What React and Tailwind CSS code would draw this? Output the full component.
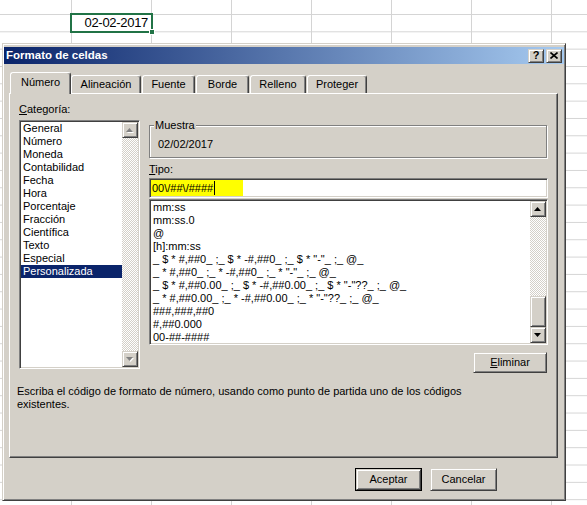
import React from 'react'

const raised = 'border border-t-[#d4d0c8] border-l-[#d4d0c8] border-r-[#404040] border-b-[#404040] shadow-[inset_1px_1px_0_#ffffff,inset_-1px_-1px_0_#808080] bg-[#d4d0c8]'
const sunken = 'border border-t-[#808080] border-l-[#808080] border-r-white border-b-white p-px shadow-[inset_1px_1px_0_#404040,inset_-1px_-1px_0_#d4d0c8] bg-white'
const dither = 'bg-[image:repeating-conic-gradient(#d4d0c8_0%_25%,#ffffff_0%_50%)] bg-size-[2px_2px]'

const categories = [
  'General', 'Número', 'Moneda', 'Contabilidad', 'Fecha', 'Hora',
  'Porcentaje', 'Fracción', 'Científica', 'Texto', 'Especial', 'Personalizada',
]

const formats = [
  'mm:ss',
  'mm:ss.0',
  '@',
  '[h]:mm:ss',
  '_ $ * #,##0_ ;_ $ * -#,##0_ ;_ $ * "-"_ ;_ @_',
  '_ * #,##0_ ;_ * -#,##0_ ;_ * "-"_ ;_ @_',
  '_ $ * #,##0.00_ ;_ $ * -#,##0.00_ ;_ $ * "-"??_ ;_ @_',
  '_ * #,##0.00_ ;_ * -#,##0.00_ ;_ * "-"??_ ;_ @_',
  '###,###,##0',
  '#,##0.000',
  '00-##-####',
]

const tabs = [
  { label: 'Alineación', w: 'w-[70px]', ml: 'ml-0' },
  { label: 'Fuente', w: 'w-[53px]', ml: 'ml-px' },
  { label: 'Borde', w: 'w-[53px]', ml: 'ml-px' },
  { label: 'Relleno', w: 'w-[56px]', ml: 'ml-px' },
  { label: 'Proteger', w: 'w-[60px]', ml: 'ml-px' },
]

function Arrow({ down, disabled }) {
  const pts = down ? '0,0 7,0 3.5,4' : '3.5,0 7,4 0,4'
  return (
    <svg width="8" height="5" viewBox="0 0 8 5">
      {disabled && <polygon points={pts} fill="#ffffff" transform="translate(1,1)" />}
      <polygon points={pts} fill={disabled ? '#808080' : '#000000'} />
    </svg>
  )
}

function ScrollBtn({ down, disabled }) {
  return (
    <div className={`${raised} w-[16px] h-[16px] flex items-center justify-center shrink-0`}>
      <Arrow down={down} disabled={disabled} />
    </div>
  )
}

export default function App() {
  return (
    <div className="relative w-[587px] h-[505px] overflow-hidden bg-white bg-[image:linear-gradient(to_right,#d4d4d4_1px,transparent_1px),linear-gradient(to_bottom,#d4d4d4_1px,transparent_1px)] bg-size-[80px_17.33px] bg-[position:71px_14px] font-['Liberation_Sans',Arial,sans-serif] text-black">
      {/* selected cell */}
      <div className="absolute left-[70px] top-[13px] w-[83px] h-[20px] border-2 border-[#217346] bg-white flex items-center justify-end pr-[3px] text-[13px] tracking-[-0.3px]">
        02-02-2017
        <div className="absolute -right-[4px] -bottom-[4px] w-[6px] h-[6px] bg-[#217346] border border-white" />
      </div>

      {/* dialog */}
      <div className="absolute left-[2px] top-[43px] w-[564px] h-[458px] bg-[#d4d0c8] border border-t-[#d4d0c8] border-l-[#d4d0c8] border-r-[#404040] border-b-[#404040] shadow-[inset_1px_1px_0_#ffffff,inset_-1px_-1px_0_#808080] px-px pt-[3px] text-[11px] leading-[13px]">
        {/* title bar */}
        <div className="h-[17px] flex items-center justify-between pl-[2px] pr-[2px] bg-[linear-gradient(to_right,#0a246a,#a6caf0)]">
          <span className="text-white font-bold text-[11.5px]">Formato de celdas</span>
          <div className="flex gap-[2px]">
            <div className={`${raised} w-[16px] h-[14px] flex items-center justify-center font-bold text-[11px] leading-none`}>?</div>
            <div className={`${raised} w-[16px] h-[14px] flex items-center justify-center`}>
              <svg width="8" height="7" viewBox="0 0 8 7">
                <path d="M0.5 0.5 L7.5 6.5 M7.5 0.5 L0.5 6.5" stroke="#000" strokeWidth="1.6" />
              </svg>
            </div>
          </div>
        </div>

        <div className="pl-[5px] pr-[6px]">
          {/* tabs */}
          <div className="mt-[8px] pl-px h-[21px] flex items-end">
            <div className="relative z-10 h-[22px] -mb-px w-[61px] bg-[#d4d0c8] border-t border-l border-r border-t-white border-l-white border-r-[#404040] rounded-t-[3px] shadow-[inset_-1px_0_0_#808080] flex items-center justify-center pb-[3px]">
              Número
            </div>
            {tabs.map((t) => (
              <div
                key={t.label}
                className={`${t.w} ${t.ml} h-[18px] border-t border-l border-r border-t-white border-l-white border-r-[#404040] rounded-t-[3px] shadow-[inset_-1px_0_0_#808080] flex items-center justify-center`}
              >
                {t.label}
              </div>
            ))}
          </div>

          {/* panel */}
          <div className="h-[365px] border border-t-white border-l-white border-r-[#404040] border-b-[#404040] shadow-[inset_-1px_-1px_0_#808080] pl-[9px] pt-[9px]">
            <div className="flex">
              {/* category */}
              <div className="w-[121px]">
                <div>
                  <span className="underline">C</span>ategoría:
                </div>
                <div className={`${sunken} mt-[4px] h-[249px] flex`}>
                  <div className="flex-1 min-w-0">
                    {categories.map((c, i) => (
                      <div
                        key={c}
                        className={`h-[13px] pl-[2px] text-[11px] leading-[13px] ${i === categories.length - 1 ? 'bg-[#0a246a] text-white' : ''}`}
                      >
                        {c}
                      </div>
                    ))}
                  </div>
                  <div className="w-[16px] flex flex-col">
                    <ScrollBtn disabled />
                    <div className={`flex-1 ${dither}`} />
                    <ScrollBtn down disabled />
                  </div>
                </div>
              </div>

              {/* right column */}
              <div className="ml-[9px] w-[399px] mt-[16px] flex flex-col">
                <fieldset className="h-[39px] w-[398px] border border-[#808080] shadow-[inset_1px_1px_0_#ffffff,1px_1px_0_#ffffff]">
                  <legend className="ml-[4px] px-px bg-[#d4d0c8] leading-[13px]">Muestra</legend>
                  <div className="mt-[6px] pl-[8px]">02/02/2017</div>
                </fieldset>

                <div className="mt-[5px]">
                  <span className="underline">T</span>ipo:
                </div>
                <div className={`${sunken} mt-[2px] h-[20px] flex`}>
                  <div className="h-full w-[92px] bg-[#ffff00] flex items-center pl-px whitespace-pre">
                    00\/##\/####
                    <span className="inline-block w-px h-[14px] bg-black ml-px" />
                  </div>
                </div>

                <div className={`${sunken} mt-px h-[146px] flex`}>
                  <div className="flex-1 min-w-0">
                    {formats.map((f) => (
                      <div key={f} className="h-[13px] pl-[2px] whitespace-pre">
                        {f}
                      </div>
                    ))}
                  </div>
                  <div className="w-[16px] flex flex-col">
                    <ScrollBtn />
                    <div className={`flex-1 ${dither}`} />
                    <div className={`${raised} h-[31px] shrink-0`} />
                    <ScrollBtn down />
                  </div>
                </div>

                <div className={`${raised} self-end mr-px mt-[7px] w-[74px] h-[21px] flex items-center justify-center`}>
                  <span>
                    <span className="underline">E</span>liminar
                  </span>
                </div>
              </div>
            </div>

            <p className="mt-[12px] -ml-[2px]">
              Escriba el código de formato de número, usando como punto de partida uno de los códigos
              <br />
              existentes.
            </p>
          </div>

          {/* buttons */}
          <div className="mt-[10px] flex justify-end gap-[8px] pr-[61px]">
            <div className="border border-black w-[67px] h-[23px]">
              <div className={`${raised} w-full h-full flex items-center justify-center`}>Aceptar</div>
            </div>
            <div className={`${raised} w-[67px] h-[23px] flex items-center justify-center`}>Cancelar</div>
          </div>
        </div>
      </div>
    </div>
  )
}
